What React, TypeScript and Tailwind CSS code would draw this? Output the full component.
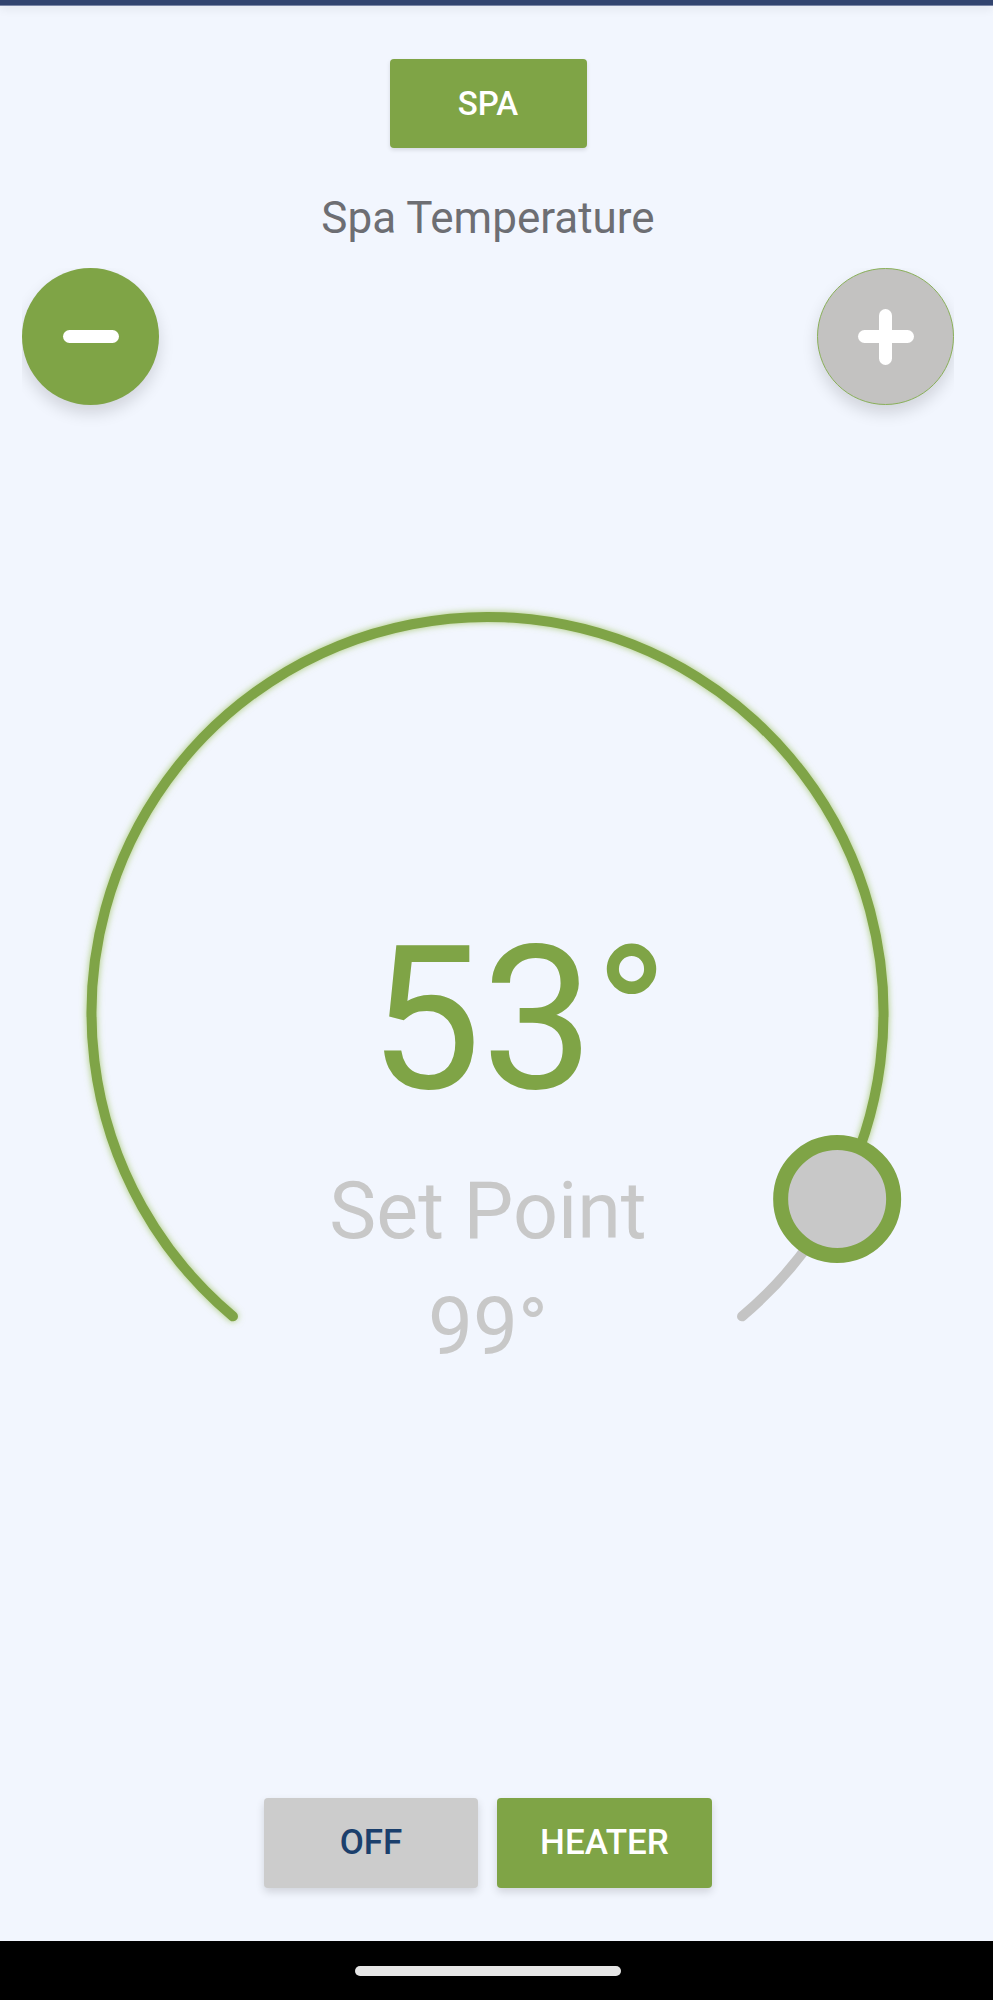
import React from "react";

const GREEN = "#7fa446";

function Gauge() {
  const cx = 487.5;
  const cy = 581;
  const r = 396;
  const pt = (deg: number) => {
    const t = (deg * Math.PI) / 180;
    return [cx + r * Math.cos(t), cy - r * Math.sin(t)];
  };
  const [sx, sy] = pt(230);
  const [kx, ky] = pt(-28);
  const [ex, ey] = pt(-50);
  return (
    <svg
      className="absolute inset-0"
      width="976"
      height="968"
      viewBox="0 0 976 968"
    >
      <defs>
        <filter id="glow" x="-20%" y="-20%" width="140%" height="140%">
          <feGaussianBlur in="SourceAlpha" stdDeviation="3.5" result="b" />
          <feFlood floodColor="#9cc05c" floodOpacity="0.85" result="c" />
          <feComposite in="c" in2="b" operator="in" result="g" />
          <feMerge>
            <feMergeNode in="g" />
            <feMergeNode in="SourceGraphic" />
          </feMerge>
        </filter>
      </defs>
      <path
        d={`M ${kx} ${ky} A ${r} ${r} 0 0 1 ${ex} ${ey}`}
        fill="none"
        stroke="#c4c4c4"
        strokeWidth="10"
        strokeLinecap="round"
      />
      <path
        d={`M ${sx} ${sy} A ${r} ${r} 0 1 1 ${kx} ${ky}`}
        fill="none"
        stroke={GREEN}
        strokeWidth="10"
        strokeLinecap="round"
        filter="url(#glow)"
      />
      <circle cx={kx} cy={ky} r="56.5" fill="#c8c8c8" stroke={GREEN} strokeWidth="15" />
    </svg>
  );
}

export default function App() {
  return (
    <div
      className="w-full h-[2000px] bg-[#f2f6fe] flex flex-col overflow-hidden"
      style={{ fontFamily: "Roboto, 'Noto Sans', sans-serif" }}
    >
      <div className="h-[6px] w-full bg-[#32446f] border-b border-[#7a86a6] shadow-[0_3px_10px_rgba(0,0,0,0.08)] relative z-10" />
      <div className="flex-1 w-[976px] flex flex-col items-center">
        <button className="mt-[53px] w-[197px] h-[89px] rounded-[4px] bg-[#7fa446] text-white text-[33px] font-medium shadow-[0_2px_4px_rgba(0,0,0,0.12)] flex items-center justify-center">
          SPA
        </button>
        <div className="mt-[45px] text-[44px] leading-[50px] text-[#6d6e73]">
          Spa Temperature
        </div>
        <div className="mt-[25px] self-stretch mx-[22px] h-[164px] overflow-hidden flex justify-between items-start">
          <div className="w-[137px] h-[137px] rounded-full bg-[#7fa446] shadow-[0_8px_16px_rgba(0,0,0,0.14)] flex items-center justify-center">
            <div className="w-[56px] h-[13px] rounded-full bg-white" />
          </div>
          <div className="w-[137px] h-[137px] rounded-full bg-[#c3c2c1] border border-[#8ab05a] shadow-[0_8px_16px_rgba(0,0,0,0.14)] flex items-center justify-center relative">
            <div className="w-[56px] h-[13px] rounded-full bg-white" />
            <div className="absolute w-[13px] h-[56px] rounded-full bg-white" />
          </div>
        </div>
        <div className="relative w-[976px] h-[968px]">
          <Gauge />
          <div className="relative flex flex-col items-center pt-[488px]">
            <div className="flex justify-center pr-[13px]">
              <span className="relative inline-block text-[200px] leading-[200px] text-[#7fa446]">
                53
                <span className="absolute left-full top-0">°</span>
              </span>
            </div>
            <div className="mt-[50px] text-[79px] leading-[82px] text-[#c8c8c8]">
              Set Point
            </div>
            <div className="mt-[34px] text-[80px] leading-[82px] text-[#c8c8c8]">
              99°
            </div>
          </div>
        </div>
        <div className="mt-[398px] flex gap-[19px]">
          <button className="w-[214px] h-[90px] rounded-[4px] bg-[#cccccc] text-[#1b3f6c] text-[35px] font-medium shadow-[0_4px_8px_rgba(0,0,0,0.14)] flex items-center justify-center">
            OFF
          </button>
          <button className="w-[215px] h-[90px] rounded-[4px] bg-[#7fa446] text-white text-[35px] font-medium shadow-[0_4px_8px_rgba(0,0,0,0.14)] flex items-center justify-center">
            HEATER
          </button>
        </div>
      </div>
      <div className="h-[59px] w-full bg-black">
        <div className="w-[976px] flex justify-center pt-[25px]">
          <div className="w-[266px] h-[10px] rounded-full bg-[#e6e6e6]" />
        </div>
      </div>
    </div>
  );
}
